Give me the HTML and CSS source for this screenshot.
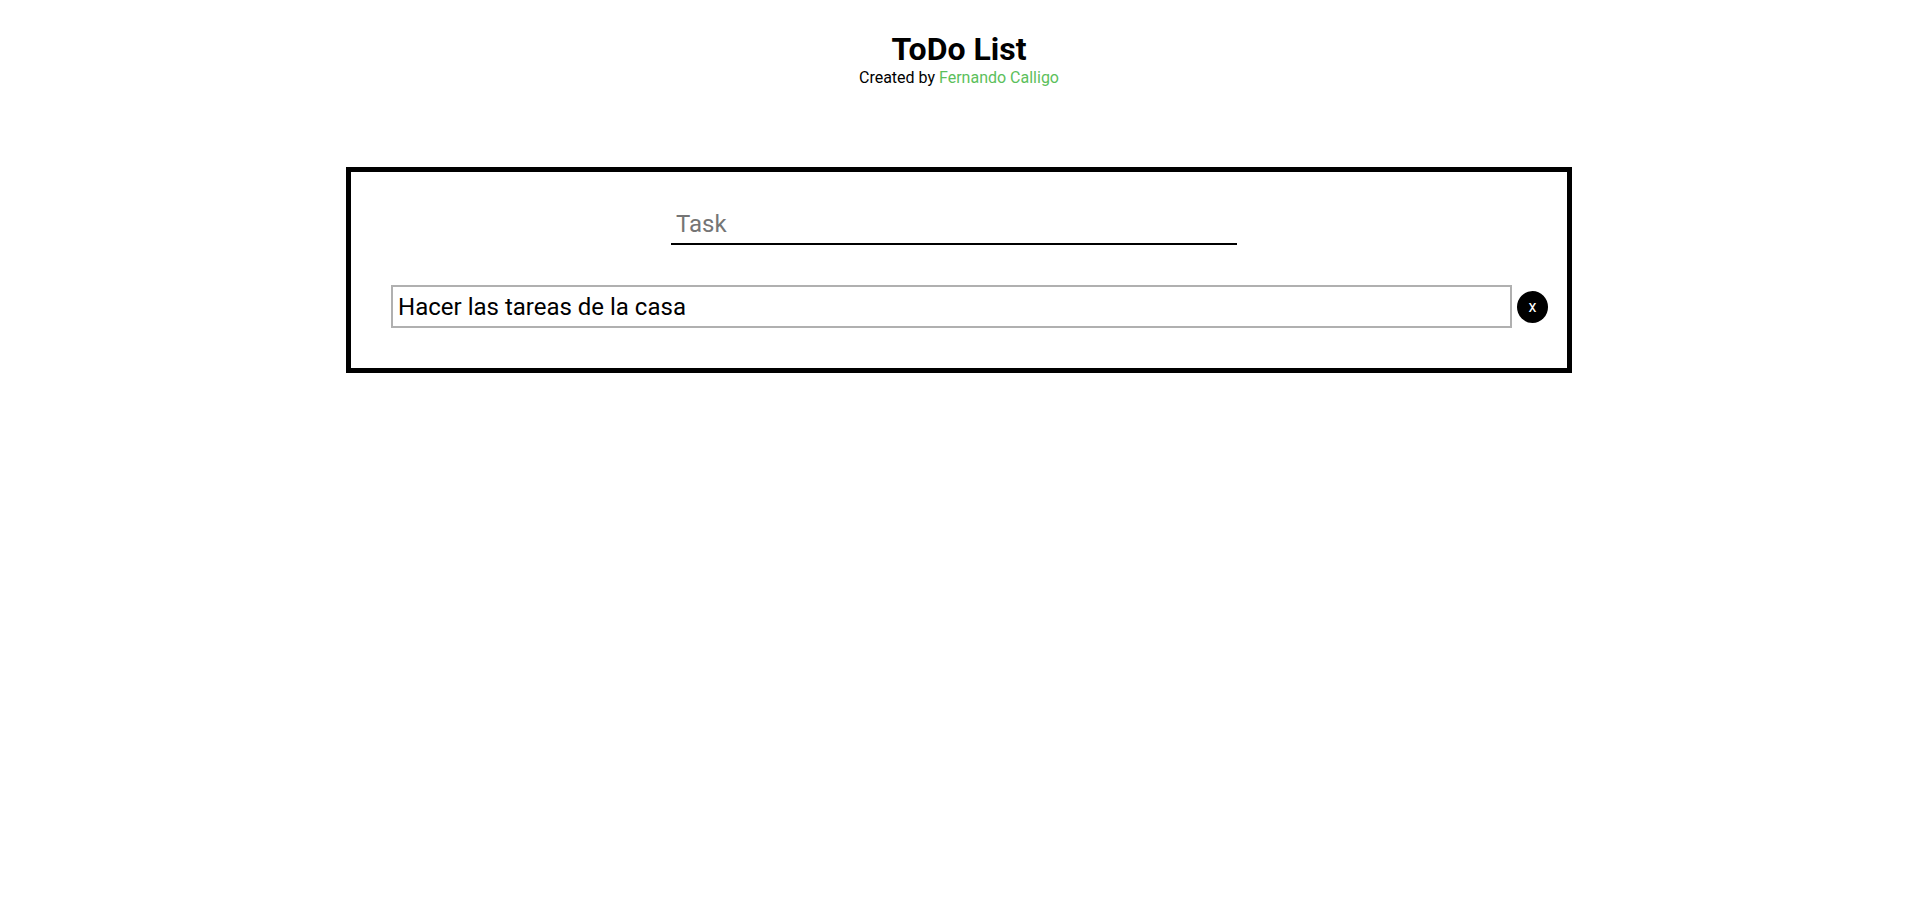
FILE: index.html
```html
<!DOCTYPE html>
<html lang="en">
<head>
  <meta charset="utf-8">
  <meta name="viewport" content="width=device-width, initial-scale=1">
  <title>ToDo List</title>
  <link rel="stylesheet" href="styles.css">
</head>
<body>
  <header class="header">
    <h1 class="title">ToDo List</h1>
    <p class="credit">Created by <a class="author" href="#">Fernando Calligo</a></p>
  </header>
  <main class="board">
    <form class="task-form">
      <input class="task-input" type="text" placeholder="Task" aria-label="Task">
    </form>
    <ul class="task-list">
      <li class="task">
        <p class="task-text">Hacer las tareas de la casa</p>
        <button class="task-delete" type="button" aria-label="Delete task">x</button>
      </li>
    </ul>
  </main>
</body>
</html>
```

FILE: styles.css
```css
* {
  box-sizing: border-box;
  margin: 0;
  padding: 0;
}

body {
  padding-right: 1px;
  background: #fff;
  color: #000;
  font-family: Roboto, sans-serif;
  font-size: 16px;
}

.header {
  padding: 30px 20px 0;
  text-align: center;
}

.title {
  font-size: 32px;
  font-weight: 700;
  line-height: 38px;
}

.credit {
  line-height: 19px;
}

.author {
  color: #5bc05b;
  text-decoration: none;
}

.board {
  width: calc(60% + 75px);
  margin: 80px auto 0;
  padding: 32px 19px 40px 40px;
  border: 5px solid #000;
}

.task-form {
  display: flex;
  justify-content: center;
  margin: 0 31px 40px 0;
}

.task-input {
  width: calc(50% + 3px);
  padding: 6px 5px 4px;
  border: 0;
  border-bottom: 2px solid #000;
  outline: none;
  background: transparent;
  font-family: inherit;
  font-size: 24px;
  line-height: 29px;
}

.task-input::placeholder {
  color: #757575;
}

.task-list {
  display: grid;
  gap: 10px;
  list-style: none;
}

.task {
  display: flex;
  align-items: center;
  gap: 5px;
}

.task-text {
  flex: 1;
  padding: 6px 5px 4px;
  border: 2px solid #b0b0b0;
  font-size: 24px;
  line-height: 29px;
}

.task-delete {
  width: 31px;
  height: 32px;
  border: 0;
  border-radius: 50%;
  background: #000;
  color: #fff;
  font-family: inherit;
  font-size: 16px;
  cursor: pointer;
}
```
